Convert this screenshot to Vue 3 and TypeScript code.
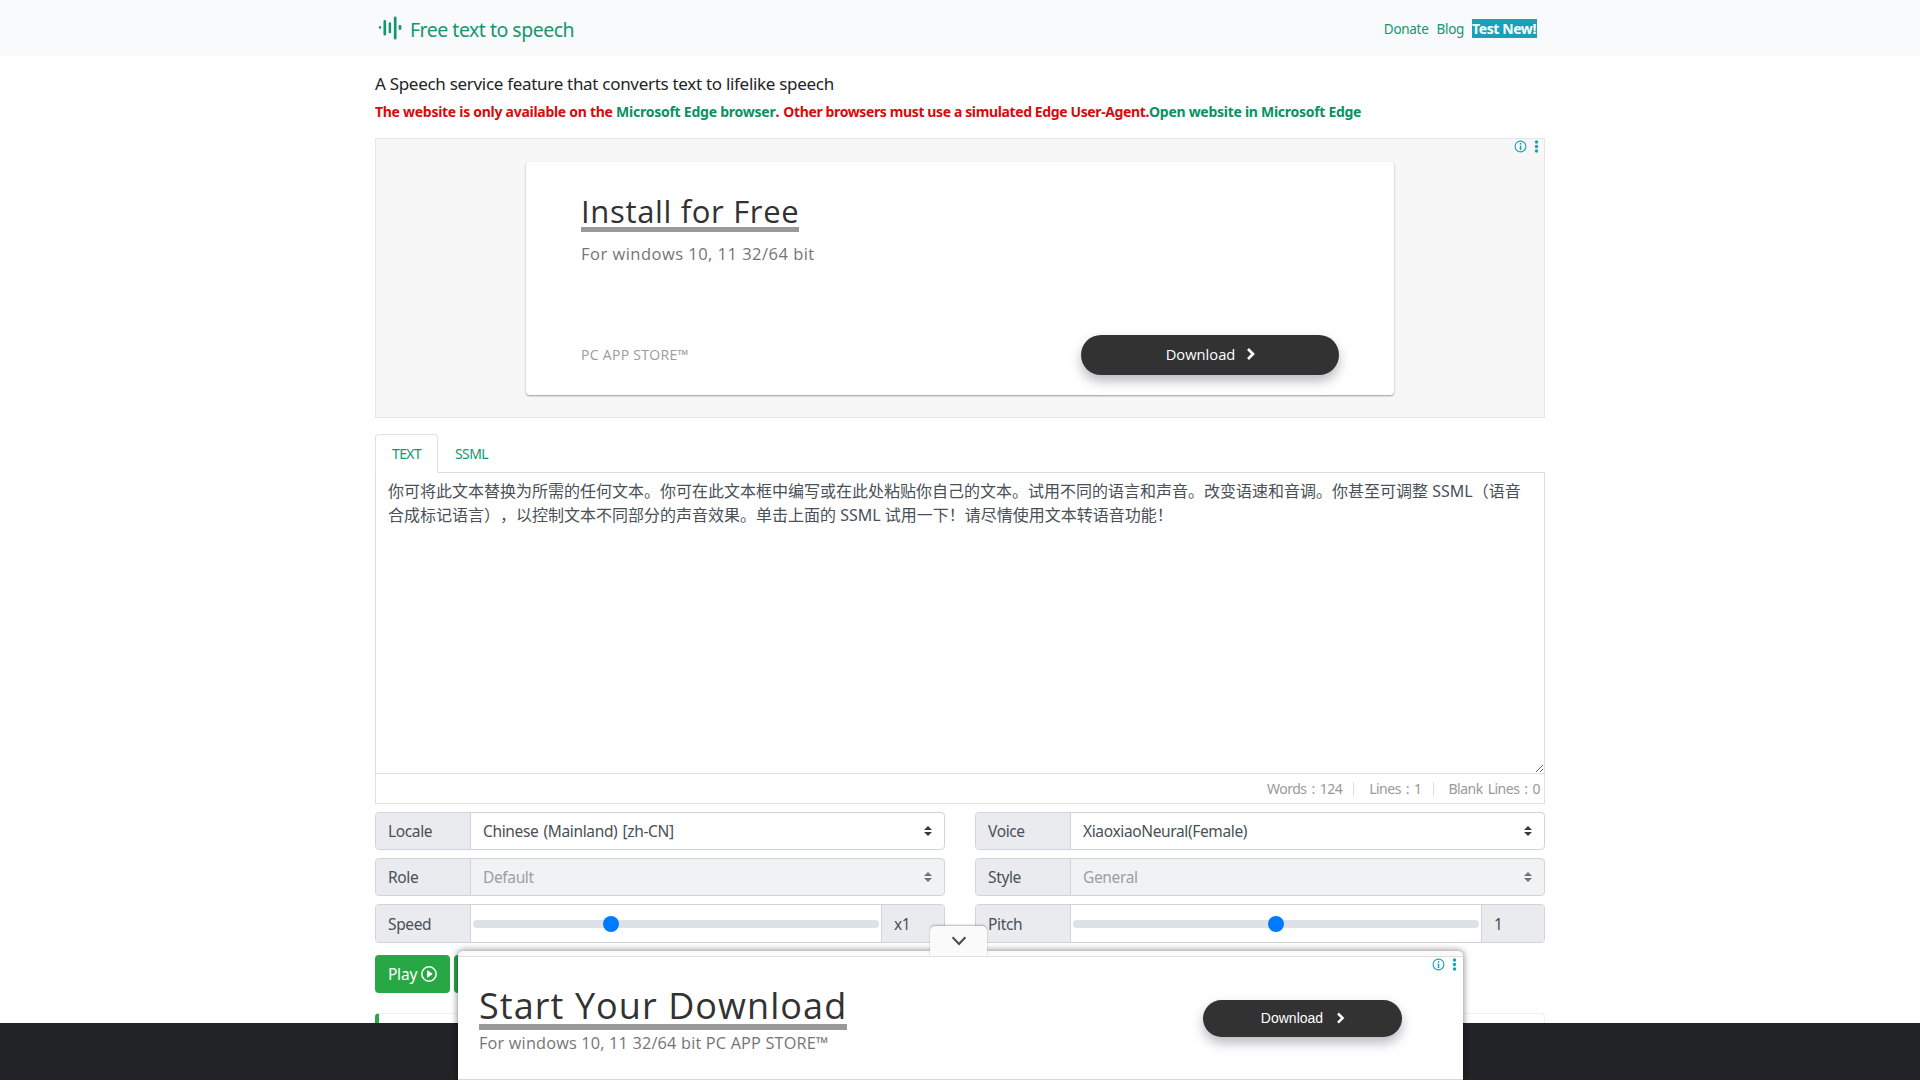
<script setup lang="ts">
import { ref } from 'vue'

interface Control {
  label: string
  kind: 'select' | 'range'
  value: string
  disabled?: boolean
  percent?: number
}

const columns: Control[][] = [
  [
    { label: 'Locale', kind: 'select', value: 'Chinese (Mainland) [zh-CN]' },
    { label: 'Role', kind: 'select', value: 'Default', disabled: true },
    { label: 'Speed', kind: 'range', value: 'x1', percent: 33.3 },
  ],
  [
    { label: 'Voice', kind: 'select', value: 'XiaoxiaoNeural(Female)' },
    { label: 'Style', kind: 'select', value: 'General', disabled: true },
    { label: 'Pitch', kind: 'range', value: '1', percent: 50 },
  ],
]

const content = ref(
  '你可将此文本替换为所需的任何文本。你可在此文本框中编写或在此处粘贴你自己的文本。试用不同的语言和声音。改变语速和音调。你甚至可调整 SSML（语音合成标记语言），以控制文本不同部分的声音效果。单击上面的 SSML 试用一下！请尽情使用文本转语音功能！',
)
</script>

<template>
  <div class="page">
    <header class="navbar">
      <div class="container nav-inner">
        <a class="brand">
          <svg class="logo" width="26" height="26" viewBox="0 0 26 26" stroke="#14976b" stroke-linecap="round" fill="none">
            <path d="M3 13.2v.4" stroke-width="2.4" />
            <path d="M7.8 7.4v12.8M18.2 3.8v20.4" stroke-width="2.7" />
            <path d="M12.9 9.4v8.6" stroke-width="2.5" />
            <path d="M23 12.2v2.6" stroke-width="2.6" />
          </svg>
          <span>Free text to speech</span>
        </a>
        <nav class="links">
          <a>Donate</a>
          <a>Blog</a>
          <a class="new">Test New!</a>
        </nav>
      </div>
    </header>

    <main class="container">
      <p class="lead">A Speech service feature that converts text to lifelike speech</p>
      <p class="warn">The website is only available on the <a class="edge">Microsoft Edge browser</a>.<span class="others"> Other browsers must use a simulated Edge User-Agent.</span><a>Open website in Microsoft Edge</a></p>

      <section class="ad">
        <div class="ad-card">
          <h2>Install for Free</h2>
          <p class="ad-sub">For windows 10, 11 32/64 bit</p>
          <div class="ad-foot">
            <span class="store">PC APP STORE™</span>
            <button class="pill">
              Download
              <svg width="10" height="14" viewBox="0 0 10 14"><path d="M2 2l5 5-5 5" fill="none" stroke="#fff" stroke-width="2.7" /></svg>
            </button>
          </div>
        </div>
        <svg class="ad-badge" width="30" height="16" viewBox="0 0 30 16" fill="#13a3b5">
          <circle cx="7.5" cy="7.5" r="5.4" fill="none" stroke="#13a3b5" stroke-width="1.1" />
          <path d="M6.8 4.1h1.5v1.5H6.8zM6.8 6.5h1.5v4.4H6.8z" />
          <circle cx="23.5" cy="3" r="1.7" /><circle cx="23.5" cy="7.5" r="1.7" /><circle cx="23.5" cy="12" r="1.7" />
        </svg>
      </section>

      <div class="tabs">
        <span class="tab active">TEXT</span>
        <span class="tab">SSML</span>
      </div>
      <textarea v-model="content" class="editor" spellcheck="false"></textarea>
      <div class="stats">
        <span>Words : 124</span><i></i>
        <span>Lines : 1</span><i></i>
        <span>Blank Lines : 0</span>
      </div>

      <div class="controls">
        <div v-for="(col, c) in columns" :key="c" class="col">
          <div v-for="item in col" :key="item.label" class="group" :class="[item.kind, { disabled: item.disabled }]">
            <span class="label">{{ item.label }}</span>
            <template v-if="item.kind === 'select'">
              <span class="value">{{ item.value }}</span>
              <svg class="caret" width="8" height="10" viewBox="0 0 4 5"><path d="M2 0L0 2h4zm0 5L0 3h4z" /></svg>
            </template>
            <template v-else>
              <span class="slider">
                <span class="track"><span class="thumb-lane"><b :style="{ left: item.percent + '%' }"></b></span></span>
              </span>
              <span class="amount">{{ item.value }}</span>
            </template>
          </div>
        </div>
      </div>

      <div class="actions">
        <button class="btn">
          Play
          <svg width="16" height="16" viewBox="0 0 16 16" fill="#fff">
            <circle cx="8" cy="8" r="7.2" fill="none" stroke="#fff" stroke-width="1.5" />
            <path d="M6.1 5v6a.5.5 0 0 0 .8.4l4.2-3a.5.5 0 0 0 0-.8l-4.2-3a.5.5 0 0 0-.8.4z" />
          </svg>
        </button>
        <button class="btn next"></button>
      </div>
      <div class="callout"></div>
    </main>
    <footer class="footer"></footer>

    <aside class="anchor-ad">
      <div class="collapse">
        <svg width="16" height="10" viewBox="0 0 16 10"><path d="M1.6 1.2L8 8l6.4-6.8" fill="none" stroke="#4a4a4a" stroke-width="2" /></svg>
      </div>
      <div class="anchor-body">
        <div>
          <h2>Start Your Download</h2>
          <p>For windows 10, 11 32/64 bit PC APP STORE™</p>
        </div>
        <button class="pill small">
          Download
          <svg width="10" height="14" viewBox="0 0 10 14"><path d="M2 2.5l4.6 4.6L2 11.7" fill="none" stroke="#fff" stroke-width="2.5" /></svg>
        </button>
        <svg class="ad-badge" width="30" height="16" viewBox="0 0 30 16" fill="#13a3b5">
          <circle cx="7.5" cy="7.5" r="5.4" fill="none" stroke="#13a3b5" stroke-width="1.1" />
          <path d="M6.8 4.1h1.5v1.5H6.8zM6.8 6.5h1.5v4.4H6.8z" />
          <circle cx="23.5" cy="3" r="1.7" /><circle cx="23.5" cy="7.5" r="1.7" /><circle cx="23.5" cy="12" r="1.7" />
        </svg>
      </div>
    </aside>
  </div>
</template>

<style>
body {
  margin: 0;
  overflow: hidden;
}
</style>

<style scoped>
.page,
.page * {
  box-sizing: border-box;
}
.page {
  position: relative;
  height: 1080px;
  overflow: hidden;
  display: flex;
  flex-direction: column;
  background: #fff;
  color: #212529;
  font-family: 'Noto Sans', 'Noto Sans CJK SC', sans-serif;
}
p,
h2 {
  margin: 0;
  font-weight: 400;
}
button {
  border: 0;
  padding: 0;
  font-family: inherit;
}
.container {
  width: 1170px;
  margin: 0 auto;
}
.navbar {
  height: 56px;
  background: #f8fafc;
}
.nav-inner {
  height: 56px;
  display: flex;
  justify-content: space-between;
}
.brand {
  display: flex;
  padding: 14px 0 0 2px;
  color: #14976b;
  font-size: 19.5px;
  letter-spacing: -0.5px;
  line-height: 32px;
}
.brand span {
  margin-left: 7px;
}
.links {
  display: flex;
  align-items: flex-start;
  gap: 8px;
  padding: 19px 8px 0 0;
  color: #14976b;
  font-size: 13.5px;
  letter-spacing: -0.3px;
  line-height: 20px;
}
.links .new {
  width: 65px;
  background: #17a2b8;
  color: #fff;
  font-size: 14px;
  font-weight: 700;
  letter-spacing: -0.4px;
  line-height: 19px;
}
.lead {
  padding-top: 14px;
  font-size: 17px;
  letter-spacing: -0.3px;
  line-height: 28px;
}
.warn {
  height: 26px;
  color: #d9090d;
  font-size: 14px;
  font-weight: 700;
  letter-spacing: -0.28px;
  line-height: 28px;
  white-space: nowrap;
}
.warn a {
  color: #079263;
}
.warn .edge {
  letter-spacing: -0.24px;
}
.warn .others {
  letter-spacing: -0.38px;
  margin-left: 1px;
}
.ad {
  position: relative;
  height: 280px;
  margin-top: 14px;
  padding: 23px 0 0;
  border: 1px solid #e6e6e6;
  background: #f7f7f7;
}
.ad-card {
  width: 868px;
  height: 233px;
  margin: 0 auto;
  padding: 28px 55px 0;
  display: flex;
  flex-direction: column;
  align-items: flex-start;
  border-radius: 4px;
  background: #fff;
  box-shadow: 0 1px 2px rgba(0, 0, 0, 0.38);
  font-family: 'Open Sans', sans-serif;
}
.ad-card h2 {
  height: 42px;
  border-bottom: 5px solid #999;
  color: #323232;
  font-size: 31px;
  letter-spacing: 0.66px;
  line-height: 43px;
}
.ad-sub {
  margin-top: 10px;
  color: #757575;
  font-size: 16.5px;
  letter-spacing: 0.48px;
  line-height: 24px;
}
.ad-foot {
  width: 100%;
  margin-top: 69px;
  display: flex;
  justify-content: space-between;
  align-items: center;
}
.store {
  margin-top: -2px;
  color: #9b9b9b;
  font-size: 14px;
  letter-spacing: 0.3px;
}
.pill {
  width: 258px;
  height: 40px;
  padding: 0 0 2px 2px;
  display: flex;
  align-items: center;
  justify-content: center;
  gap: 11px;
  border-radius: 20px;
  background: #323232;
  box-shadow: 0 6px 12px rgba(60, 64, 80, 0.36);
  color: #fff;
  font-size: 14.7px;
}
.pill.small {
  width: 199px;
  height: 37px;
  padding-bottom: 1px;
  gap: 13px;
  font-family: 'Liberation Sans', Arial, sans-serif;
  font-size: 14px;
}
.ad-badge {
  position: absolute;
  top: 0;
  right: 1px;
}
.tabs {
  height: 38px;
  margin-top: 16px;
  display: flex;
}
.tab {
  height: 39px;
  padding: 0 16px;
  border: 1px solid transparent;
  border-bottom: 0;
  color: #14976b;
  font-size: 14px;
  letter-spacing: -0.6px;
  line-height: 38px;
}
.tab.active {
  position: relative;
  z-index: 1;
  width: 63px;
  border-color: #dee2e6;
  border-radius: 4px 4px 0 0;
  background: #fff;
}
.editor {
  display: block;
  width: 100%;
  height: 302px;
  padding: 6px 12px;
  border: 1px solid #dcdfe2;
  border-radius: 0;
  outline: 0;
  background: #fff;
  color: #495057;
  font: 16px/24px 'Noto Sans', 'Noto Sans CJK SC', sans-serif;
  resize: vertical;
  text-spacing-trim: space-all;
}
.stats {
  height: 30px;
  padding-right: 4px;
  display: flex;
  align-items: center;
  justify-content: flex-end;
  border: 1px solid #dee2e6;
  border-top: 0;
  color: #999;
  font-size: 14px;
  letter-spacing: -0.5px;
  word-spacing: 1.8px;
}
.stats i {
  width: 1px;
  height: 14px;
  margin: 0 15px 0 11px;
  background: #ddd;
}
.controls {
  margin-top: 8px;
  display: flex;
  gap: 30px;
}
.col {
  flex: 1;
  display: flex;
  flex-direction: column;
  gap: 8px;
}
.group {
  height: 38px;
  display: flex;
  align-items: stretch;
  border: 1px solid #ced4da;
  border-radius: 4px;
  overflow: hidden;
  color: #495057;
  font-size: 15.5px;
  letter-spacing: -0.36px;
  word-spacing: 1.5px;
  line-height: 36px;
}
.group.range {
  height: 39px;
  line-height: 39px;
}
.label {
  width: 95px;
  padding-left: 12px;
  border-right: 1px solid #ced4da;
  background: #e9ebee;
}
.value {
  flex: 1;
  padding-left: 12px;
}
.caret {
  align-self: center;
  margin-right: 12px;
  fill: #343a40;
}
.disabled .value {
  color: #9a9fa4;
}
.group.disabled {
  background: #f0f2f3;
}
.disabled .caret {
  fill: #6c757d;
}
.slider {
  flex: 1;
  display: flex;
  align-items: center;
  padding: 0 2px;
}
.track {
  flex: 1;
  height: 8px;
  padding: 0 8px;
  border-radius: 4px;
  background: #dee2e6;
}
.thumb-lane {
  display: block;
  position: relative;
}
.thumb-lane b {
  position: absolute;
  top: -4px;
  width: 16px;
  height: 16px;
  margin-left: -8px;
  border-radius: 50%;
  background: #007bff;
}
.amount {
  width: 63px;
  padding-left: 12px;
  border-left: 1px solid #ced4da;
  background: #e9ebee;
}
.actions {
  margin-top: 12px;
  display: flex;
  gap: 4px;
}
.btn {
  width: 75px;
  height: 38px;
  display: flex;
  align-items: center;
  justify-content: center;
  gap: 4px;
  border-radius: 4px;
  background: #28a745;
  color: #fff;
  font-size: 15.5px;
  letter-spacing: -0.2px;
}
.callout {
  height: 40px;
  margin-top: 20px;
  border: 1px solid #eee;
  border-left: 4px solid #28a745;
  border-radius: 4px;
}
.footer {
  position: absolute;
  left: 0;
  right: 0;
  bottom: 0;
  height: 57px;
  background: #212327;
}
.anchor-ad {
  position: absolute;
  left: 458px;
  bottom: 0;
  width: 1005px;
  height: 129px;
  padding-top: 5px;
  border-radius: 5px 5px 0 0;
  background: #fafafa;
  box-shadow: 0 0 6px 1px rgba(0, 0, 0, 0.42);
  font-family: 'Open Sans', sans-serif;
}
.collapse {
  position: absolute;
  left: 472px;
  top: -25px;
  width: 57px;
  height: 30px;
  display: flex;
  justify-content: center;
  padding-top: 10px;
  border-radius: 5px 5px 0 0;
  background: #fafafa;
  box-shadow: 0 -1px 2px rgba(0, 0, 0, 0.28);
  clip-path: inset(-5px -5px 0 -5px);
}
.anchor-body {
  position: relative;
  height: 124px;
  padding: 27px 61px 0 21px;
  display: flex;
  align-items: flex-start;
  justify-content: space-between;
  border-top: 1px solid #dedede;
  border-bottom: 1px solid #d8d8d8;
  background: #fff;
}
.anchor-body h2 {
  width: max-content;
  height: 46px;
  border-bottom: 6px solid #999;
  color: #323232;
  font-size: 36px;
  letter-spacing: 1.07px;
  line-height: 44px;
}
.anchor-body p {
  margin-top: 1px;
  color: #757575;
  font-size: 16.3px;
  letter-spacing: 0.18px;
  line-height: 24px;
}
.anchor-body .pill {
  margin-top: 16px;
}
.anchor-body .ad-badge {
  right: 2px;
}
</style>
